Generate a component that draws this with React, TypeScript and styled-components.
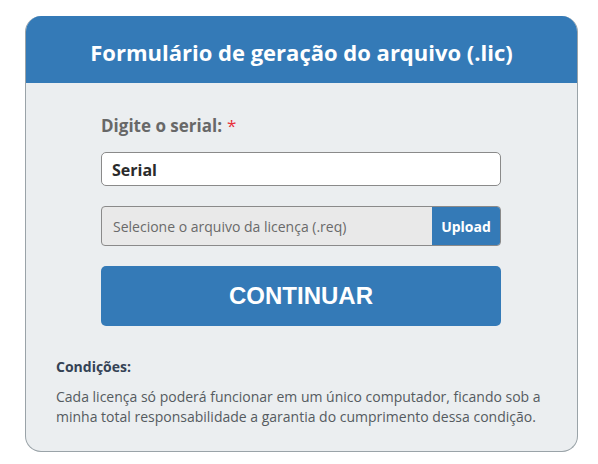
import React from "react";
import styled, { createGlobalStyle } from "styled-components";

const Global = createGlobalStyle`
  html, body { margin: 0; padding: 0; background: #ffffff; }
  body { font-family: "Open Sans", "Noto Sans", sans-serif; }
  * { box-sizing: border-box; }
`;

const Page = styled.div`
  width: 598px;
  height: 464px;
  padding: 16px 20px 0 25px;
`;

const Card = styled.div`
  width: 553px;
  height: 436px;
  border-radius: 16px;
  overflow: hidden;
  display: flex;
  flex-direction: column;
  background: #ebeef0;
  border: 1px solid #9aa3a8;
  border-top: none;
`;

const Header = styled.div`
  height: 67px;
  background: #347ab7;
  margin: 0 -1px;
  display: flex;
  align-items: center;
  justify-content: center;
`;

const Title = styled.h1`
  margin: 0;
  padding-top: 4px;
  color: #ffffff;
  font-size: 22px;
  font-weight: 700;
  letter-spacing: 0;
`;

const Form = styled.div`
  display: flex;
  flex-direction: column;
  padding: 32px 0 0 75px;
  width: 475px;
`;

const Label = styled.label`
  font-size: 17px;
  font-weight: 700;
  color: #686868;
  line-height: 22px;
  display: flex;
  gap: 5px;
`;

const Req = styled.span`
  color: #e8303a;
  font-weight: 400;
`;

const TextInput = styled.div`
  margin-top: 15px;
  height: 34px;
  border: 1px solid #8a8a8a;
  border-radius: 5px;
  background: #ffffff;
  display: flex;
  align-items: center;
  padding: 2px 0 0 10px;
  font-size: 16px;
  font-weight: 700;
  color: #2b2b2b;
`;

const FileRow = styled.div`
  margin-top: 20px;
  height: 40px;
  border: 1px solid #8a8a8a;
  border-radius: 4px;
  background: #e9e9e9;
  display: flex;
  overflow: hidden;
`;

const FileText = styled.div`
  flex: 1;
  display: flex;
  align-items: center;
  padding-left: 11px;
  font-size: 14px;
  color: #6a6a6a;
`;

const UploadBtn = styled.div`
  width: 68px;
  background: #347ab7;
  color: #ffffff;
  font-size: 14px;
  font-weight: 700;
  display: flex;
  align-items: center;
  justify-content: center;
`;

const Continue = styled.button`
  margin-top: 20px;
  height: 60px;
  border: none;
  border-radius: 5px;
  background: #347ab7;
  color: #ffffff;
  font-family: "Liberation Sans", Arial, sans-serif;
  font-size: 24px;
  font-weight: 700;
  padding: 0;
`;

const Conditions = styled.div`
  padding: 31px 0 0 30px;
  width: 530px;
`;

const CondTitle = styled.div`
  font-size: 14px;
  font-weight: 700;
  color: #344255;
  line-height: 20px;
`;

const CondText = styled.p`
  margin: 10px 0 0;
  font-size: 14px;
  line-height: 20px;
  color: #555b60;
`;

export default function App() {
  return (
    <Page>
      <Global />
      <Card>
        <Header>
          <Title>Formulário de geração do arquivo (.lic)</Title>
        </Header>
        <Form>
          <Label>
            Digite o serial: <Req>*</Req>
          </Label>
          <TextInput>Serial</TextInput>
          <FileRow>
            <FileText>Selecione o arquivo da licença (.req)</FileText>
            <UploadBtn>Upload</UploadBtn>
          </FileRow>
          <Continue>CONTINUAR</Continue>
        </Form>
        <Conditions>
          <CondTitle>Condições:</CondTitle>
          <CondText>
            Cada licença só poderá funcionar em um único computador, ficando sob a
            minha total responsabilidade a garantia do cumprimento dessa condição.
          </CondText>
        </Conditions>
      </Card>
    </Page>
  );
}
